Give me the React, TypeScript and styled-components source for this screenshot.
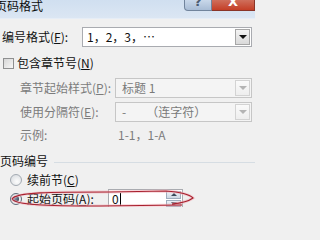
import { FC, ReactNode } from "react";
import styled, { createGlobalStyle } from "styled-components";

const GlobalStyle = createGlobalStyle`
  html, body {
    margin: 0;
    padding: 0;
    background: #f0f0f0;
  }
  body {
    font-family: "Noto Sans CJK SC", "Liberation Sans", sans-serif;
    font-size: 12px;
    color: #111;
  }
`;

const Window = styled.div`
  position: relative;
  width: 255px;
  height: 207px;
  overflow: hidden;
  background: #f0f0f0;
`;

const TitleBar = styled.div`
  height: 18px;
  display: flex;
  justify-content: space-between;
  align-items: flex-start;
  background: linear-gradient(#d0dff0, #dbe6f3);
  border-bottom: 1px solid #e6edf6;
`;

const Title = styled.div`
  margin-left: -5px;
  line-height: 12px;
  font-size: 12px;
  color: #0c0c0c;
`;

const CaptionButtons = styled.div`
  display: flex;
`;

const CaptionButton = styled.div<{ $close?: boolean }>`
  width: ${(p) => (p.$close ? 43 : 28)}px;
  height: 11px;
  box-sizing: border-box;
  overflow: hidden;
  display: flex;
  align-items: flex-end;
  justify-content: center;
  border: 1px solid ${(p) => (p.$close ? "#8a3528" : "#71849c")};
  border-top: none;
  border-left-width: ${(p) => (p.$close ? 0 : 1)}px;
  border-radius: ${(p) => (p.$close ? "0" : "0 0 0 4px")};
  background: ${(p) =>
    p.$close
      ? "linear-gradient(#cf6f5c, #c43f27)"
      : "linear-gradient(#c9d8ea, #a8bcd5)"};
  color: ${(p) => (p.$close ? "#fff" : "#4d5d72")};

  span {
    font-family: "DejaVu Sans", sans-serif;
    font-weight: bold;
    font-size: 13px;
    line-height: 15px;
    margin-bottom: 1px;
  }
`;

const Body = styled.div`
  padding: 8px 3px 0 2px;
  display: flex;
  flex-direction: column;
`;

const Row = styled.div<{ $indent?: number; $top?: number; $h?: number }>`
  display: flex;
  align-items: center;
  height: ${(p) => p.$h ?? 20}px;
  margin-top: ${(p) => p.$top ?? 0}px;
  padding-left: ${(p) => p.$indent ?? 0}px;
`;

const Label = styled.div<{ $w?: number; $disabled?: boolean }>`
  width: ${(p) => (p.$w ? `${p.$w}px` : "auto")};
  flex: none;
  white-space: nowrap;
  line-height: 14px;
  color: ${(p) => (p.$disabled ? "#7c7c7c" : "#111")};

  u {
    text-decoration: underline;
    text-underline-offset: 1px;
  }
`;

const Combo = styled.div<{ $disabled?: boolean }>`
  flex: 1;
  height: 20px;
  box-sizing: border-box;
  display: flex;
  align-items: center;
  padding: 0 1px 0 ${(p) => (p.$disabled ? 6 : 4)}px;
  border: 1px solid ${(p) => (p.$disabled ? "#c6c6c6" : "#a9abb0")};
  background: ${(p) => (p.$disabled ? "#f4f4f4" : "#fff")};
  color: ${(p) => (p.$disabled ? "#7a7a7a" : "#111")};
  line-height: 14px;
  white-space: nowrap;
`;

const ComboText = styled.div`
  flex: 1;
  display: flex;
  gap: 20px;
`;

const DropButton = styled.div<{ $disabled?: boolean }>`
  width: 15px;
  height: 16px;
  box-sizing: border-box;
  display: flex;
  align-items: center;
  justify-content: center;
  border: 1px solid ${(p) => (p.$disabled ? "#d3d3d3" : "#a6a6a6")};
  background: ${(p) =>
    p.$disabled
      ? "linear-gradient(#fafafa, #eeeeee)"
      : "linear-gradient(#f4f4f4, #d9d9d9)"};

  &::after {
    content: "";
    border-left: 4px solid transparent;
    border-right: 4px solid transparent;
    border-top: 4px solid ${(p) => (p.$disabled ? "#b4b4b4" : "#111")};
  }
`;

const CheckBox = styled.div`
  width: 11px;
  height: 11px;
  box-sizing: border-box;
  margin: 0 3px 0 1px;
  border: 1px solid #8e8f90;
  background: linear-gradient(135deg, #d6d6d6, #f7f7f7);
`;

const SectionHeader = styled.div`
  display: flex;
  align-items: center;
  height: 18px;
  margin: 7px -3px 0 -2px;
  gap: 6px;
  line-height: 14px;

  &::after {
    content: "";
    flex: 1;
    height: 1px;
    margin-top: 3px;
    background: #d6dde3;
  }
`;

const Radio = styled.div<{ $checked?: boolean }>`
  width: 12px;
  height: 12px;
  box-sizing: border-box;
  border-radius: 50%;
  margin-right: 5px;
  flex: none;
  display: flex;
  align-items: center;
  justify-content: center;
  border: 1px solid ${(p) => (p.$checked ? "#5d6a78" : "#a3aab2")};
  background: radial-gradient(circle at 60% 65%, #fdfdfd, #d4d8dc);

  &::after {
    content: "";
    display: ${(p) => (p.$checked ? "block" : "none")};
    width: 6px;
    height: 6px;
    border-radius: 50%;
    background: radial-gradient(circle at 35% 35%, #8a9bb0, #1f2d3d);
  }
`;

const SpinBox = styled.div`
  width: 75px;
  height: 20px;
  box-sizing: border-box;
  display: flex;
  align-items: center;
  padding: 0 1px 0 3px;
  border: 1px solid #a9abb0;
  background: #fff;
  line-height: 14px;
`;

const Caret = styled.span`
  flex: 1;

  &::after {
    content: "";
    display: inline-block;
    width: 1px;
    height: 13px;
    margin-left: 1px;
    vertical-align: -2px;
    background: #000;
  }
`;

const Spinner = styled.div`
  width: 15px;
  height: 16px;
  display: flex;
  flex-direction: column;
  gap: 1px;
`;

const SpinHalf = styled.div<{ $up?: boolean }>`
  flex: 1;
  display: flex;
  align-items: center;
  justify-content: center;
  border: 1px solid #9fadbd;
  background: linear-gradient(#edf2f7, #cdd8e4);

  &::after {
    content: "";
    border-left: 3px solid transparent;
    border-right: 3px solid transparent;
    ${(p) => (p.$up ? "border-bottom" : "border-top")}: 3px solid #3c4a5a;
  }
`;

const Annotation = styled.svg`
  position: absolute;
  left: 0;
  top: 0;
  pointer-events: none;
`;

const Key: FC<{ k: string; children: ReactNode; colon?: boolean }> = ({
  k,
  children,
  colon,
}) => (
  <>
    {children}(<u>{k}</u>){colon ? ":" : ""}
  </>
);

const App: FC = () => {
  return (
    <>
      <GlobalStyle />
      <Window>
        <TitleBar>
          <Title>页码格式</Title>
          <CaptionButtons>
            <CaptionButton>
              <span>?</span>
            </CaptionButton>
            <CaptionButton $close>
              <span>X</span>
            </CaptionButton>
          </CaptionButtons>
        </TitleBar>
        <Body>
          <Row>
            <Label $w={80}>
              <Key k="F" colon>
                编号格式
              </Key>
            </Label>
            <Combo>
              <ComboText>1，2，3，…</ComboText>
              <DropButton />
            </Combo>
          </Row>
          <Row $top={6}>
            <CheckBox />
            <Label>
              <Key k="N">包含章节号</Key>
            </Label>
          </Row>
          <Row $top={5} $indent={18}>
            <Label $w={95} $disabled>
              <Key k="P" colon>
                章节起始样式
              </Key>
            </Label>
            <Combo $disabled>
              <ComboText>标题 1</ComboText>
              <DropButton $disabled />
            </Combo>
          </Row>
          <Row $top={4} $indent={18}>
            <Label $w={95} $disabled>
              <Key k="E" colon>
                使用分隔符
              </Key>
            </Label>
            <Combo $disabled>
              <ComboText>
                <span>-</span>
                <span>（连字符）</span>
              </ComboText>
              <DropButton $disabled />
            </Combo>
          </Row>
          <Row $top={3} $indent={18}>
            <Label $w={98} $disabled>
              示例:
            </Label>
            <Label $disabled>1-1，1-A</Label>
          </Row>
          <SectionHeader>页码编号</SectionHeader>
          <Row $h={19} $indent={8}>
            <Radio />
            <Label>
              <Key k="C">续前节</Key>
            </Label>
          </Row>
          <Row $indent={8}>
            <Radio $checked />
            <Label $w={81}>
              <Key k="A" colon>
                起始页码
              </Key>
            </Label>
            <SpinBox>
              <Caret>0</Caret>
              <Spinner>
                <SpinHalf $up />
                <SpinHalf />
              </Spinner>
            </SpinBox>
          </Row>
        </Body>
        <Annotation width="255" height="207" viewBox="0 0 255 207">
          <path
            d="M 12 199 C 16 192, 50 192, 110 192 L 166 191 C 180 192, 190 195, 193 198 C 189 201, 182 203, 172 204 M 12 199 C 16 205, 45 206, 100 206 L 182 205"
            fill="none"
            stroke="#f2b8c0"
            strokeWidth="3"
            opacity="0.6"
          />
          <path
            d="M 12 199 C 16 192, 50 192, 110 192 L 166 191 C 180 192, 190 195, 193 198 C 189 201, 182 203, 172 204 M 12 199 C 16 205, 45 206, 100 206 L 182 205"
            fill="none"
            stroke="#a8202e"
            strokeWidth="1.1"
          />
        </Annotation>
      </Window>
    </>
  );
};

export default App;
